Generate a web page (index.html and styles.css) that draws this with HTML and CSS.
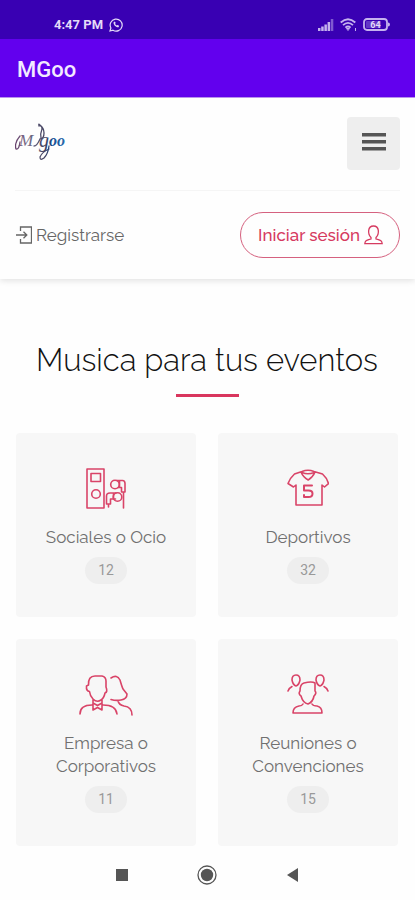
FILE: index.html
```html
<!DOCTYPE html>
<html lang="es">
<head>
<meta charset="utf-8">
<meta name="viewport" content="width=device-width, initial-scale=1">
<title>MGoo</title>
<link rel="stylesheet" href="styles.css">
</head>
<body>
<div class="status">
  <div class="status-group">
    <span>4:47 PM</span>
    <svg width="14" height="14" viewBox="0 0 14 14" fill="none" stroke="currentColor" stroke-width="1.2"><path d="M1 13l.9-3A6 6 0 1 1 4 12.2z"/><path d="M4.6 4.2c-.5 2.5 2.5 5.5 5 5l.5-1.4-1.6-.9-.9.7-1.6-1.6.7-.9-.8-1.6z" fill="currentColor" stroke="none"/></svg>
  </div>
  <div class="status-group icons">
    <svg width="16" height="12" viewBox="0 0 16 12" fill="currentColor"><path d="M0 9h2.500v3H0zM3.200 7.500h2.500V12H3.200zM6.400 5.500h2.500V12H6.400zM9.600 3h2.500v9H9.600z"/><path d="M12.800 0h2.500v12h-2.500z" opacity=".5"/></svg>
    <svg width="17" height="14" viewBox="0 0 17 14" fill="none" stroke="currentColor" stroke-width="1.8"><path d="M.7 4.500q7.300-6.600 14.600 0M3 7.200q5-4.600 10 0M5.400 9.600q2.600-2.200 5.200 0"/><path d="M6.500 10.500h3L8 12.500zM15.500 10v3" stroke-width="1"/></svg>
    <svg class="battery" width="28" height="14" viewBox="0 0 28 14"><rect x="1" y="1" width="23" height="11" rx="3" fill="none" stroke="currentColor" stroke-width="1.800"/><path d="M25 4.500q2 0 2 2t-2 2z" fill="currentColor"/><rect x="3" y="3" width="15" height="7" rx="1" fill="currentColor" opacity=".3"/><text x="12.500" y="10" text-anchor="middle">64</text></svg>
  </div>
</div>
<div class="appbar">MGoo</div>
<header class="header">
  <div class="brand-row">
    <a class="logo" href="#" aria-label="Mgoo">
      <svg width="52" height="44" viewBox="0 0 52 44">
        <defs><linearGradient id="ink" gradientUnits="userSpaceOnUse" x1="0" y1="0" x2="50" y2="0"><stop offset="0" stop-color="#68406c"/><stop offset=".25" stop-color="#77718b"/><stop offset=".6" stop-color="#42415f"/><stop offset=".75" stop-color="#164b92"/><stop offset="1" stop-color="#286bae"/></linearGradient></defs>
        <text class="logo-m" x="4" y="25">M</text>
        <text class="logo-g" x="24" y="26">g</text>
        <text class="logo-oo" x="34" y="25">oo</text>
        <g fill="none" stroke="url(#ink)" stroke-linecap="round"><path d="M5 15q-6 7-4 13 3 1 4-7" stroke-width="1.300"/><path d="M19 25q3 0 6-7 4 0 4-6 0-5-4-8-2-2-1 1 3-1 3 3-2 5-1 9" stroke-width="1.300"/><path d="M34 25q-1 8-5 12-4 3-4-1 2-5 9-8" stroke-width="1.300"/></g>
      </svg>
    </a>
    <button class="menu" type="button" aria-label="Menú"><svg width="24" height="18" viewBox="0 0 24 18" fill="currentColor"><path d="M0 0h24v3.500H0zM0 7h24v3.500H0zM0 14h24v3.500H0z"/></svg></button>
  </div>
  <div class="account-row">
    <a class="register" href="#">
      <svg width="16" height="18" viewBox="0 0 16 18" fill="none" stroke="currentColor" stroke-width="1.300"><path d="M4.500 5V1h11v16h-11v-4M0 9h10.500M7.500 5.800L10.800 9l-3.300 3.200"/></svg>
      Registrarse
    </a>
    <a class="login" href="#">Iniciar sesión
      <svg width="19" height="20" viewBox="0 0 19 20" fill="none" stroke="currentColor" stroke-width="1.300"><path d="M7 12.500v1.500c-4 1.200-6 1.200-6.200 4.700h17.400c-.2-3.500-2.200-3.500-6.200-4.700v-1.500C15.500 9 15.500 1 9.500 1S3.500 9 7 12.500z"/></svg>
    </a>
  </div>
</header>
<main class="main">
  <h1 class="title">Musica para tus eventos</h1>
  <div class="grid">
    <a class="card" href="#">
      <svg width="44" height="42" viewBox="0 0 44 42"><path d="M3 1h17v39H3zM7 5.500h9.500v8H7z"/><circle cx="12" cy="26" r="4.300"/><circle cx="31" cy="16.500" r="4.300"/><path d="M33 12.500h5.500q2.500 0 2.500 3V24h-3.500v-4.500H34M35.500 13v6M39.500 24v16"/><circle cx="33.500" cy="29" r="4.300"/><path d="M32 25h-6q-3.500 0-3.500 3v8h4v-5h5M29.500 25.500v5M24.500 36v3"/></svg>
      <span class="label">Sociales o Ocio</span><span class="count">12</span>
    </a>
    <a class="card" href="#">
      <svg width="42" height="42" viewBox="0 0 42 42"><path d="M15 3.500L7.500 6Q3 10 1 15.500L6.500 19l2.500-2v20h26V17l2.500 2 4-3.500Q40 10 35.500 6L27 3.500Q21 1 15 3.500zM14 4q2 5 7.200 8Q26 9 28 4M15 4.500q6 2.500 12 0"/><path class="thick" d="M25 17.500h-8v5h4.500q4 0 4 3.200t-4 3.300H17v-2"/></svg>
      <span class="label">Deportivos</span><span class="count">32</span>
    </a>
    <a class="card" href="#">
      <svg width="54" height="42" viewBox="0 0 54 42"><path d="M14 25q-3-3-3.500-7.500Q7 17 7.500 12l2-1Q9 2 16 2h7q4 1 4 5v6q2 5-1 6-1 5-4 7-4 3-8-1zM14 26v3M23 26v3M32 4q6-4 9 2 2 7 3 9l4 5q0 5-6 6-5 1-10-.5M39 27q1 4 6 5 8 1 8 9M1 40q0-9 12-9M24 31q13 0 14 9M14 29l4.500 2.500L23 29v7l-4.500-2.500L14 36z"/></svg>
      <span class="label">Empresa o Corporativos</span><span class="count">11</span>
    </a>
    <a class="card" href="#">
      <svg width="42" height="42" viewBox="0 0 42 42"><path d="M13 17q0-7 4-8 8-2 11 0v8q2 2-1 5-1 6-6 8-5-1-7-8-3-2-1-5zM16 30q-1 2-4 2-6 1-6 7h29q0-6-5-7-4 0-5-2"/><path d="M9 1q4 0 4 5-1 5-4 6-3-1-4-6 0-5 4-5zM33 1q4 0 4 5-1 5-4 6-3-1-4-6 0-5 4-5zM5 12.500Q2 14 1 17M37 12.500q3 1.500 4 4.500"/></svg>
      <span class="label">Reuniones o Convenciones</span><span class="count">15</span>
    </a>
  </div>
</main>
<nav class="sysnav" aria-label="Sistema">
  <button type="button" aria-label="Recientes"><svg width="20" height="20" viewBox="0 0 20 20"><path d="M4 4h12v12H4z" fill="currentColor"/></svg></button>
  <button type="button" aria-label="Inicio"><svg width="20" height="20" viewBox="0 0 20 20"><circle cx="10" cy="10" r="9" fill="none" stroke="currentColor" stroke-width="1.300"/><circle cx="10" cy="10" r="6.200" fill="currentColor"/></svg></button>
  <button type="button" aria-label="Atrás"><svg width="20" height="20" viewBox="0 0 20 20"><path d="M15 3v14L4 10z" fill="currentColor"/></svg></button>
</nav>
</body>
</html>
```
FILE: styles.css
```css
* { box-sizing: border-box; }
body {
  margin: 0;
  min-height: 100vh;
  display: flex;
  flex-direction: column;
  background: #fefefe;
  color: #666;
  font-family: Raleway, Lato, sans-serif;
}
a { color: inherit; text-decoration: none; }
button { border: 0; padding: 0; color: inherit; background: none; }
svg { display: block; flex: none; }

.status {
  height: 39px;
  padding: 10px 24px 0 54px;
  display: flex;
  justify-content: space-between;
  background: #3900b3;
  color: #e4daf8;
  font: 700 13px/29px Roboto, sans-serif;
}
.status-group { height: 29px; display: flex; align-items: center; gap: 6px; }
.icons { color: #c5b2ee; }
.battery text { font: 700 9px Roboto, sans-serif; fill: #e4daf8; }

.appbar {
  height: 59px;
  padding: 0 17px;
  background: #6200ee;
  border-bottom: 1px solid #bd96f2;
  color: #f3eaff;
  font: 500 22px/62px Roboto, sans-serif;
}

.header { padding: 19px 15px 21px; background: #fefefe; box-shadow: 0 2px 6px rgba(0, 0, 0, .11); }
.brand-row {
  display: flex;
  justify-content: space-between;
  padding-bottom: 20px;
  border-bottom: 1px solid #f5f5f5;
}
.logo { padding-top: 4px; }
.logo text { font-family: "Liberation Serif", serif; font-style: italic; fill: url(#ink); }
.logo-m { font-size: 17px; }
.logo-g { font-size: 20px; }
.logo .logo-oo { font-size: 16px; font-weight: 700; }
.menu {
  width: 53px;
  height: 53px;
  display: grid;
  place-items: center;
  padding-bottom: 4px;
  border-radius: 4px;
  background: #eee;
  color: #555;
}
.account-row { padding-top: 21px; display: flex; align-items: center; justify-content: space-between; }
.register { display: flex; align-items: center; gap: 4px; padding-left: 1px; font-size: 17px; }
.login {
  height: 46px;
  padding: 0 16px 0 17px;
  display: flex;
  align-items: center;
  gap: 4px;
  border: 1px solid #d5617f;
  border-radius: 23px;
  color: #d63a60;
  font-size: 17px;
  font-weight: 500;
}

.main { flex: 1; padding: 61px 17px 4px 16px; }
.title {
  margin: 0 0 36px;
  display: flex;
  flex-direction: column;
  align-items: center;
  gap: 14px;
  color: #111;
  font-size: 31px;
  font-weight: 300;
  line-height: 40px;
  text-align: center;
}
.title::after { content: ""; width: 63px; height: 3px; background: #d9365e; }
.grid { display: grid; grid-template-columns: 1fr 1fr; gap: 22px; }
.card {
  padding: 35px 24px 33px;
  display: flex;
  flex-direction: column;
  align-items: center;
  border-radius: 4px;
  background: #f7f7f7;
  text-align: center;
}
.card svg { fill: none; stroke: #d94468; stroke-width: 1.6; stroke-linecap: round; stroke-linejoin: round; }
.card .thick { stroke-width: 2; }
.label { margin: 16px 0 8px; color: #707070; font-size: 17px; line-height: 23px; }
.count {
  min-width: 42px;
  height: 27px;
  border-radius: 14px;
  background: #eee;
  color: #999;
  font: 14px/27px Roboto, sans-serif;
}

.sysnav {
  height: 50px;
  padding: 0 79px;
  display: grid;
  grid-template-columns: repeat(3, 1fr);
  place-items: center;
  background: #fefefe;
  color: #555;
}
```
